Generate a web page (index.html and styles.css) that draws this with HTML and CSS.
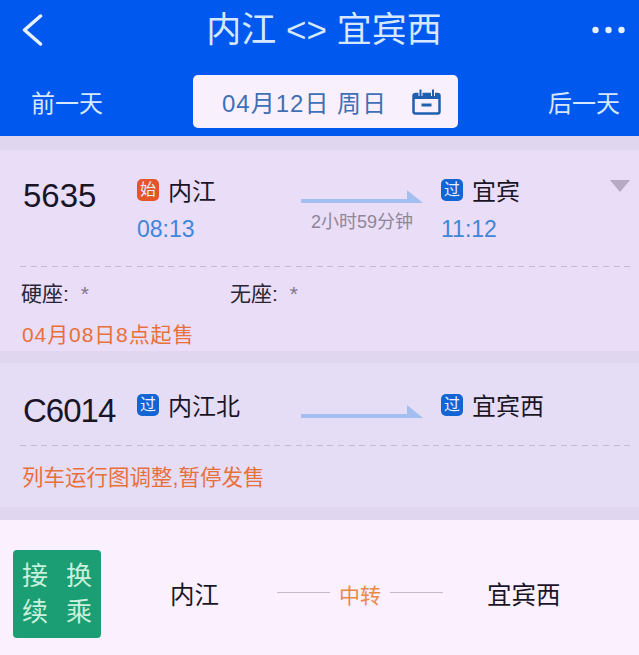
FILE: index.html
```html
<!DOCTYPE html>
<html lang="zh-CN">
<head>
<meta charset="UTF-8">
<meta name="viewport" content="width=device-width, initial-scale=1.0">
<title>内江 &lt;&gt; 宜宾西</title>
<link rel="stylesheet" href="styles.css">
</head>
<body>

<header class="header">
  <div class="nav">
    <svg class="back" width="34" height="32" viewBox="0 0 34 32" fill="none">
      <path d="M18.500 2 L2.500 16 L18.500 30" stroke="#e8f2ff" stroke-width="3.500" stroke-linecap="round" stroke-linejoin="round"/>
    </svg>
    <div class="title">内江 &lt;&gt; 宜宾西</div>
    <svg class="more" width="33" height="8" viewBox="0 0 33 8">
      <circle cx="3.500" cy="4" r="3.200" fill="#e8f2ff"/>
      <circle cx="16.500" cy="4" r="3.200" fill="#e8f2ff"/>
      <circle cx="29.500" cy="4" r="3.200" fill="#e8f2ff"/>
    </svg>
  </div>
  <div class="date-row">
    <div class="day-link">前一天</div>
    <div class="date-box">
      <span class="date-text">04月12日 周日</span>
      <svg width="29" height="26" viewBox="0 0 29 26" fill="none" stroke="#1f5fb0">
        <rect x="1.500" y="5" width="26" height="19.500" rx="2" stroke-width="2.500"/>
        <path d="M1.500 7.500H27.500" stroke-width="5"/>
        <path d="M8.500 1V7M21 1V7" stroke="#f8f1fd" stroke-width="4"/>
        <path d="M8.500 0.500V7M21 0.500V7" stroke-width="2"/>
        <path d="M9.500 16H19.500" stroke-width="3"/>
      </svg>
    </div>
    <div class="day-link day-next">后一天</div>
  </div>
</header>

<section class="card card-first">
  <div class="route">
    <div class="train-no">5635</div>
    <div>
      <div class="station"><span class="badge badge-start">始</span>内江</div>
      <div class="time">08:13</div>
    </div>
    <div class="trip">
      <svg class="arrow" width="122" height="13" viewBox="0 0 122 13"><path d="M0 9H106V0L122 13H0Z"/></svg>
      <div class="duration">2小时59分钟</div>
    </div>
    <div>
      <div class="station"><span class="badge badge-pass">过</span>宜宾</div>
      <div class="time">11:12</div>
    </div>
    <div class="caret"></div>
  </div>
  <div class="divider"></div>
  <div class="seats">
    <div class="seat">硬座:<span class="star">*</span></div>
    <div class="seat">无座:<span class="star">*</span></div>
  </div>
  <div class="notice">04月08日8点起售</div>
</section>

<section class="card card-second">
  <div class="route">
    <div class="train-no">C6014</div>
    <div>
      <div class="station"><span class="badge badge-pass">过</span>内江北</div>
    </div>
    <div class="trip">
      <svg class="arrow" width="122" height="13" viewBox="0 0 122 13"><path d="M0 9H106V0L122 13H0Z"/></svg>
    </div>
    <div>
      <div class="station"><span class="badge badge-pass">过</span>宜宾西</div>
    </div>
  </div>
  <div class="divider"></div>
  <div class="notice notice-wide">列车运行图调整,暂停发售</div>
</section>

<section class="transfer">
  <div class="transfer-tag">
    <span>接</span><span>换</span>
    <span>续</span><span>乘</span>
  </div>
  <div class="transfer-from">内江</div>
  <div class="connector">
    <span class="connector-line"></span>
    <span class="connector-text">中转</span>
    <span class="connector-line"></span>
  </div>
  <div class="transfer-to">宜宾西</div>
</section>

</body>
</html>
```

FILE: styles.css
```css
body {
  margin: 0;
  height: 655px;
  overflow: hidden;
  background-color: #e1d6f0;
  color: #1a1526;
  font-family: "Liberation Sans", "Noto Sans CJK SC", sans-serif;
}

.header {
  height: 136px;
  background-color: #0058ee;
  margin-bottom: 14px;
}

.nav {
  height: 60px;
  padding: 0 14px 0 22px;
  margin-bottom: 15px;
  display: flex;
  justify-content: space-between;
  align-items: center;
}

.title {
  font-size: 35px;
  line-height: 60px;
  color: #d6e8ff;
}

.date-row {
  display: grid;
  grid-template-columns: 162px 265px 1fr;
  align-items: center;
  padding: 0 19px 0 31px;
}

.day-link {
  font-size: 24px;
  color: #d6e8ff;
}

.day-next {
  justify-self: end;
}

.date-box {
  height: 53px;
  padding: 0 17px 0 29px;
  background-color: #f8f1fd;
  border-radius: 5px;
  display: flex;
  justify-content: space-between;
  align-items: center;
}

.date-text {
  font-size: 24px;
  letter-spacing: 1px;
  color: #3f6fb5;
}

.card {
  margin-bottom: 12px;
}

.card-first {
  height: 201px;
  padding-top: 26px;
  box-sizing: border-box;
  background-color: #e9ddf8;
}

.card-second {
  height: 144px;
  margin-bottom: 13px;
  padding-top: 28px;
  box-sizing: border-box;
  background-color: #e5dcf6;
}

.route {
  display: grid;
  grid-template-columns: 114px 164px 140px 1fr auto;
  padding: 0 9px 0 23px;
}

.train-no {
  font-size: 33px;
  line-height: 40px;
}

.card-second .train-no {
  letter-spacing: -1px;
}

.station {
  display: flex;
  align-items: flex-start;
  gap: 9px;
  font-size: 24px;
  line-height: 32px;
}

.badge {
  width: 22px;
  height: 22px;
  border-radius: 5px;
  margin-top: 3px;
  display: flex;
  justify-content: center;
  align-items: center;
  font-size: 16px;
  line-height: 22px;
  color: #e8eeff;
}

.badge-start {
  background-color: #e4562a;
}

.badge-pass {
  background-color: #1465d4;
}

.time {
  margin-top: 7px;
  font-size: 23px;
  line-height: 28px;
  color: #3f86d8;
}

.trip {
  padding-top: 14px;
}

.arrow {
  display: block;
  fill: #a3bff0;
}

.duration {
  width: 122px;
  margin-top: 7px;
  text-align: center;
  font-size: 18px;
  line-height: 24px;
  color: #8d8798;
}

.caret {
  width: 0;
  height: 0;
  margin-top: 4px;
  border-left: 10px solid transparent;
  border-right: 10px solid transparent;
  border-top: 12px solid #b5a9c4;
}

.divider {
  height: 1px;
  margin: 23px 9px 0 20px;
  background-image: repeating-linear-gradient(to right, #c4bad0 0, #c4bad0 6px, transparent 6px, transparent 10.600px);
}

.card-second .divider {
  margin-top: 14px;
}

.seats {
  display: flex;
  margin-top: 13px;
  padding-left: 21px;
}

.seat {
  width: 209px;
  font-size: 21px;
  line-height: 28px;
  color: #2a2535;
}

.star {
  margin-left: 12px;
  color: #7d7788;
}

.notice {
  margin-top: 13px;
  padding-left: 22px;
  font-size: 21px;
  letter-spacing: 0.900px;
  line-height: 28px;
  color: #e8703a;
}

.notice-wide {
  margin-top: 18px;
  font-size: 21.500px;
  letter-spacing: 0;
}

.transfer {
  height: 135px;
  padding: 30px 0 0 13px;
  box-sizing: border-box;
  background-color: #faf0fe;
  display: flex;
  align-items: flex-start;
}

.transfer-tag {
  width: 88px;
  height: 88px;
  border-radius: 4px;
  background-color: #1b9e73;
  color: #c8f0dc;
  font-size: 26px;
  line-height: 36px;
  display: grid;
  grid-template-columns: 26px 26px;
  grid-auto-rows: 36px;
  column-gap: 18px;
  justify-content: center;
  align-content: center;
}

.transfer-from,
.transfer-to {
  font-size: 24.500px;
  line-height: 92px;
}

.transfer-from {
  margin-left: 69px;
}

.transfer-to {
  margin-left: 44px;
}

.connector {
  height: 88px;
  margin-left: 58px;
  display: flex;
  align-items: center;
  gap: 9px;
}

.connector-line {
  width: 53px;
  margin-top: -4px;
  border-top: 1px solid #c2bccb;
}

.connector-text {
  font-size: 21px;
  color: #e88a45;
}
```
